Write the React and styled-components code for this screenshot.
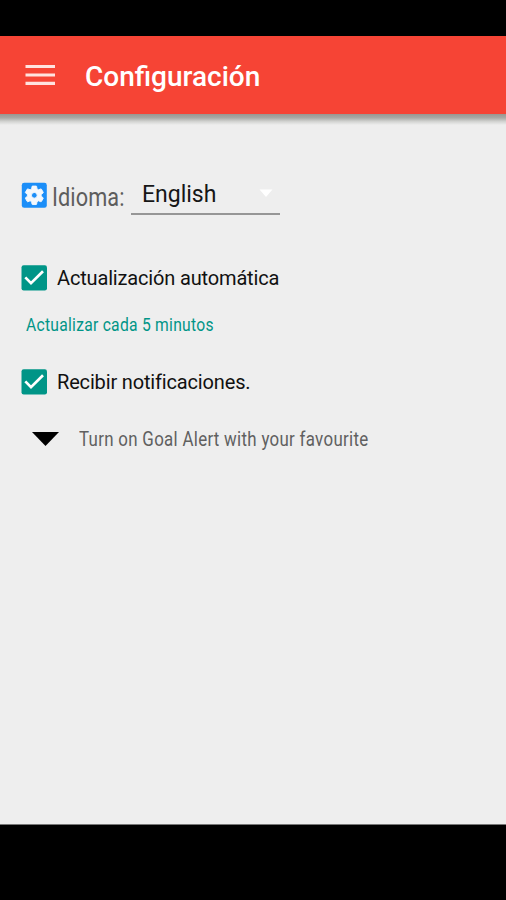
import React from 'react'
import styled, { createGlobalStyle } from 'styled-components'

const primary = '#f64435'
const accent = '#009587'
const surface = '#eeeeee'

const GlobalStyle = createGlobalStyle`
  body {
    margin: 0;
    background: #000;
    font-family: Roboto, sans-serif;
  }
`

const Screen = styled.div`
  display: flex;
  flex-direction: column;
  box-sizing: border-box;
  height: 900px;
  padding: 36px 0 75px;
  background: #000;
`

const Toolbar = styled.header`
  display: flex;
  align-items: center;
  flex: none;
  gap: 30px;
  height: 78px;
  padding: 0 25px;
  box-sizing: border-box;
  background: ${primary};
`

const MenuButton = styled.button`
  display: flex;
  padding: 0;
  border: 0;
  background: none;
`

const Title = styled.h1`
  margin: 0;
  padding-top: 4px;
  color: #fff;
  font-size: 28px;
  font-weight: 500;
  line-height: 32px;
`

// Shadow that the toolbar casts on the content
const Shade = styled.div`
  flex: none;
  height: 11px;
  background: linear-gradient(#9a9690, #a9aaa6 35%, #d4d5d3 70%, ${surface});
`

const Content = styled.main`
  display: flex;
  flex-direction: column;
  align-items: flex-start;
  flex: 1;
  padding: 48px 21px 0;
  border-bottom: 1px solid #777;
  background: ${surface};
`

const LanguageRow = styled.div`
  display: flex;
  align-items: center;
  height: 44px;
`

const LanguageLabel = styled.div`
  width: 84px;
  padding: 3px 0 0 5px;
  box-sizing: border-box;
`

const Condensed = styled.span`
  display: inline-block;
  color: ${props => props.$color};
  font-size: ${props => props.$size}px;
  letter-spacing: ${props => props.$spacing || 0}px;
  white-space: nowrap;
  transform: scaleX(${props => props.$scale});
  transform-origin: left center;
`

const Select = styled.div`
  display: flex;
  justify-content: space-between;
  box-sizing: border-box;
  width: 149px;
  height: 40px;
  padding: 7px 7px 0 11px;
  border-bottom: 2px solid #969696;
  color: #161616;
  font-size: 23px;
  line-height: 26px;
`

const CheckRow = styled.div`
  display: flex;
  align-items: center;
  gap: 10px;
  height: 26px;
  margin-top: ${props => props.$top}px;
  color: #111;
  font-size: 20px;
  letter-spacing: -0.16px;
`

const Interval = styled.div`
  height: 24px;
  margin: 22px 0 0 5px;
  line-height: 24px;
`

const AlertRow = styled.div`
  display: flex;
  align-items: center;
  gap: 20px;
  height: 26px;
  margin: 31px 0 0 11px;
`

const Check = () => (
  <svg width="26" height="26" viewBox="0 0 26 26">
    <rect x="0.5" y="0.3" width="25.5" height="25.2" rx="2.2" fill={accent}/>
    <path d="M4.3 12.4l5.7 5.8L22 6.2" fill="none" stroke="#fff" strokeWidth="2.7"/>
  </svg>
)

const Gear = () => (
  <svg width="26" height="26" viewBox="0 0 26 26">
    <rect x="0.8" y="0.8" width="25" height="25" rx="2.4" fill="#1b8ef8"/>
    <path
      transform="translate(1.8 1.8) scale(0.96)"
      fill="#f4f8fc"
      stroke="#f4f8fc"
      strokeWidth="1"
      d="M19.14 12.94c.04-.3.06-.61.06-.94 0-.32-.02-.64-.07-.94l2.03-1.58c.18-.14.23-.41.12-.61l-1.92-3.32c-.12-.22-.37-.29-.59-.22l-2.39.96c-.5-.38-1.03-.7-1.62-.94L14.4 2.81c-.04-.24-.24-.41-.48-.41h-3.84c-.24 0-.43.17-.47.41l-.36 2.54c-.59.24-1.13.57-1.62.94l-2.39-.96c-.22-.08-.47 0-.59.22L2.74 8.87c-.12.21-.08.47.12.61l2.03 1.58c-.05.3-.09.63-.09.94s.02.64.07.94l-2.03 1.58c-.18.14-.23.41-.12.61l1.92 3.32c.12.22.37.29.59.22l2.39-.96c.5.38 1.03.7 1.62.94l.36 2.54c.05.24.24.41.48.41h3.84c.24 0 .44-.17.47-.41l.36-2.54c.59-.24 1.13-.56 1.62-.94l2.39.96c.22.08.47 0 .59-.22l1.92-3.32c.12-.22.07-.47-.12-.61l-2.01-1.58zM12 15A3 3 0 1 1 12 9a3 3 0 0 1 0 6z"
    />
  </svg>
)

const App = () => {
  return (
    <>
      <GlobalStyle/>
      <Screen>
        <Toolbar>
          <MenuButton aria-label="Menu">
            <svg width="30" height="22" viewBox="0 0 30 22">
              <path d="M0.5 2.5h29.5M0.5 11h29.5M0.5 19.3h29.5" stroke="#ffe3df" strokeWidth="3.2"/>
            </svg>
          </MenuButton>
          <Title>Configuración</Title>
        </Toolbar>
        <Shade/>
        <Content>
          <LanguageRow>
            <Gear/>
            <LanguageLabel>
              <Condensed $size={26} $scale={0.835} $spacing={0.1} $color="#5d5d5d">Idioma:</Condensed>
            </LanguageLabel>
            <Select>
              <span>English</span>
              <svg width="14" height="26" viewBox="0 0 14 26">
                <path d="M0.5 7.5h13l-6.5 7.5z" fill="#fff"/>
              </svg>
            </Select>
          </LanguageRow>
          <CheckRow $top={48}>
            <Check/>
            <span>Actualización automática</span>
          </CheckRow>
          <Interval>
            <Condensed $size={18} $scale={0.87} $spacing={0.3} $color={accent}>Actualizar cada 5 minutos</Condensed>
          </Interval>
          <CheckRow $top={32}>
            <Check/>
            <span>Recibir notificaciones.</span>
          </CheckRow>
          <AlertRow>
            <svg width="27" height="14" viewBox="0 0 27 14">
              <path d="M0 0h27L13.5 14z"/>
            </svg>
            <Condensed $size={19.5} $scale={0.865} $spacing={0.35} $color="#606060">Turn on Goal Alert with your favourite</Condensed>
          </AlertRow>
        </Content>
      </Screen>
    </>
  )
}

export default App
